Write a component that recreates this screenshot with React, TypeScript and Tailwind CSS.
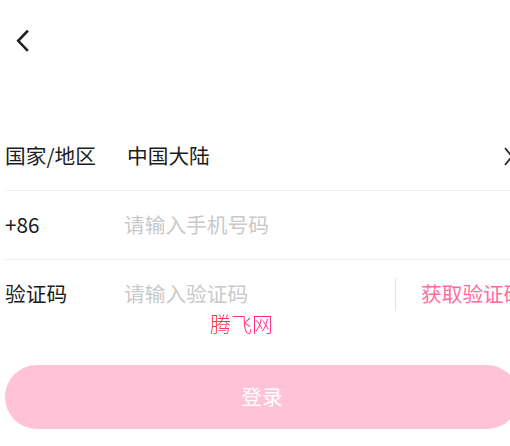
import React from "react";

export default function App() {
  const font = { fontFamily: '"Noto Sans CJK SC", "Noto Sans", sans-serif' };
  return (
    <div className="w-[510px] h-[446px] overflow-hidden bg-white relative" style={font}>
      <div className="w-[514px] ml-[5px]">
        <div className="h-[122px] pt-[30px] pl-[11px]">
          <svg width="13" height="22" viewBox="0 0 13 22" fill="none">
            <path d="M11 1.5 L2.2 10.8 L11 20" stroke="#222" strokeWidth="2.6" strokeLinecap="square" />
          </svg>
        </div>
        <div className="h-[69px] flex items-center border-b border-[#f0f0f0] text-[20.7px] text-[#1c1c1c]">
          <span className="w-[122px] shrink-0">国家/地区</span>
          <span className="flex-1">中国大陆</span>
          <svg className="mr-[6px] shrink-0" width="9" height="19" viewBox="0 0 9 19" fill="none">
            <path d="M1 1 L8 9.5 L1 18" stroke="#222" strokeWidth="1.7" />
          </svg>
        </div>
        <div className="h-[69px] flex items-center border-b border-[#ececec] text-[20.7px] text-[#1c1c1c]">
          <span className="w-[119px] shrink-0">+86</span>
          <input
            className="flex-1 min-w-0 outline-none bg-transparent text-[20.7px] placeholder:text-[#c9c9c9]"
            placeholder="请输入手机号码"
          />
        </div>
        <div className="h-[68px] flex items-center text-[20.7px] text-[#1c1c1c]">
          <span className="w-[119px] shrink-0">验证码</span>
          <input
            className="w-[271px] shrink-0 outline-none bg-transparent text-[20.7px] placeholder:text-[#c9c9c9]"
            placeholder="请输入验证码"
          />
          <div className="w-px h-[33px] shrink-0 bg-[#e4e4e4]" />
          <span className="pl-[25px] shrink-0 whitespace-nowrap text-[#ff6c9c]">获取验证码</span>
        </div>
        <div className="h-[37px]" />
        <button className="w-[514px] h-[64px] rounded-full bg-[#ffc2d7] text-white text-[20.7px]">
          登录
        </button>
      </div>
      <div className="absolute left-[210px] top-[313px] text-[21px] leading-none bg-gradient-to-r from-[#ff3344] via-[#ff2f7a] to-[#ff2a8a] bg-clip-text text-transparent font-light">
        腾飞网
      </div>
    </div>
  );
}
